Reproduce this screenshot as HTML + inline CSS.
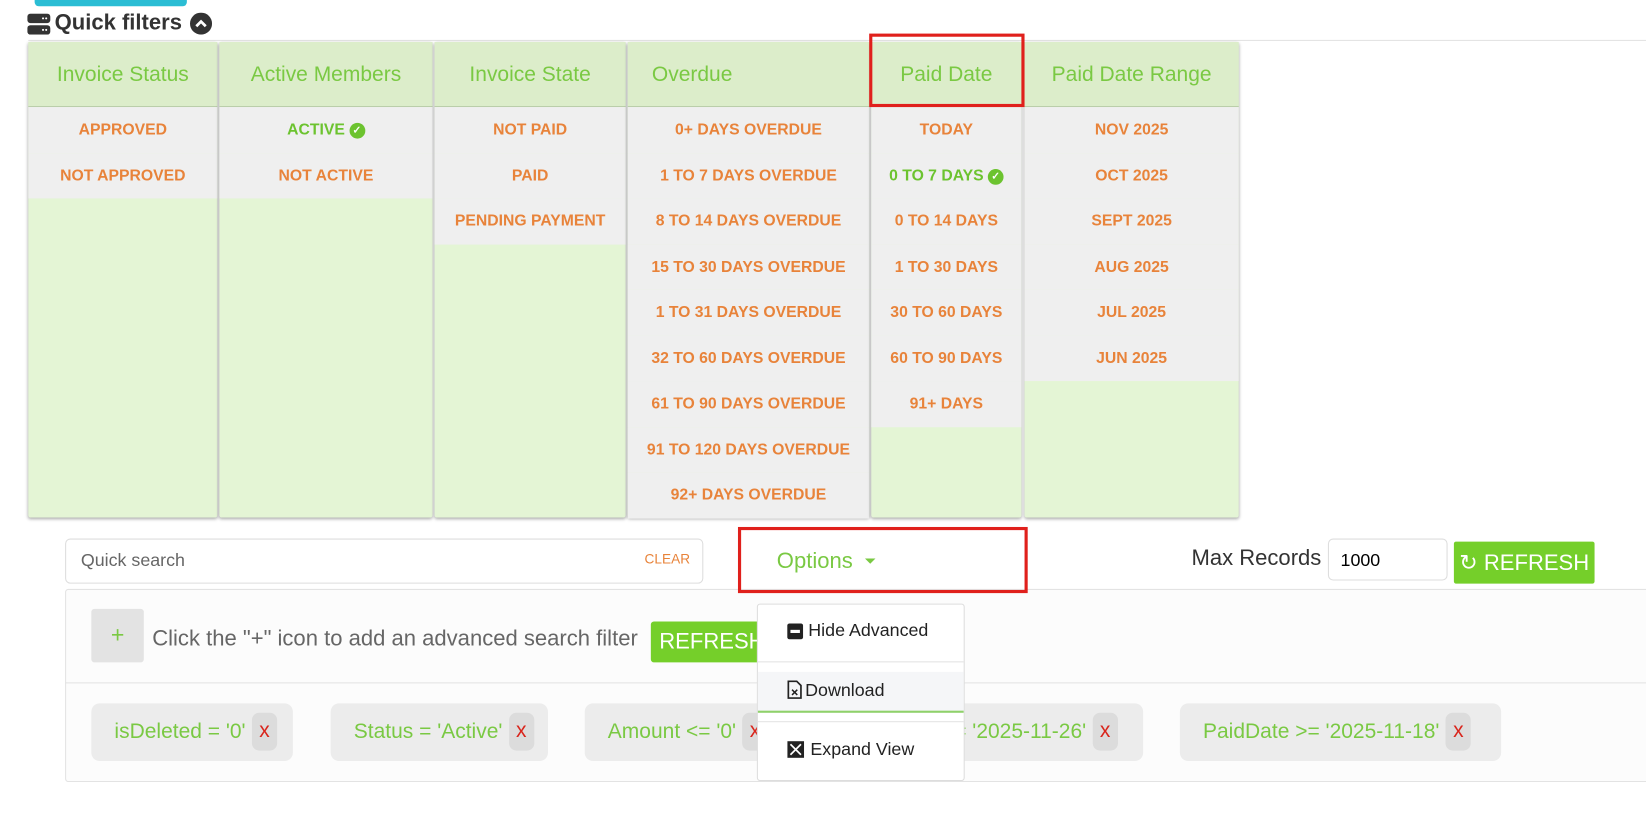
<!DOCTYPE html>
<html><head><style>
html,body{margin:0;width:1646px;height:836px;background:#fff;overflow:hidden}
#w{position:absolute;left:0;top:0;width:1568px;height:797px;transform:scale(1.04974);transform-origin:0 0;font-family:"Liberation Sans",sans-serif}
.a{position:absolute}
.col{position:absolute;top:40px;height:453px;background:#e4f5d5;box-shadow:0 1px 3px rgba(0,0,0,.35);border-radius:2px}
.col .h{height:61px;background:#dcedca;border-bottom:1px solid #b9cda9;color:#7ac943;font-size:20px;text-align:center;line-height:62px}
.col .r{height:43.5px;background:#efefef;color:#e8833a;font-weight:bold;font-size:15px;text-align:center;line-height:43px}
.col .r.g{color:#6cc32f}
.chk{display:inline-block;width:15px;height:15px;border-radius:50%;background:#6cc32f;color:#fff;font-size:10px;line-height:15px;vertical-align:1px;margin-left:4px}
.chip{position:absolute;top:670px;height:55px;background:#ececec;border-radius:8px;color:#7ac943;font-size:20px;line-height:55px;padding-left:22px}
.chip i{font-style:normal;display:inline-block;background:#dcdcdc;color:#d9251c;border-radius:7px;width:24px;height:36px;line-height:34px;text-align:center;margin-left:6px;vertical-align:1px}
</style></head><body><div id="w">
<div class="a" style="left:33px;top:0;width:145px;height:6px;background:#2bbdd4;border-radius:0 0 4px 4px"></div>
<div class="a" style="left:27px;top:38px;width:1541px;height:1px;background:#e3e3e3"></div>
<svg class="a" style="left:26px;top:13px" width="22" height="20"><rect x="0" y="0" width="22" height="9" rx="3" fill="#333"/><rect x="0" y="11" width="22" height="9" rx="3" fill="#333"/><circle cx="15" cy="4.5" r="1" fill="#fff"/><circle cx="18" cy="4.5" r="1" fill="#fff"/><circle cx="15" cy="15.5" r="1" fill="#fff"/><circle cx="18" cy="15.5" r="1" fill="#fff"/></svg>
<div class="a" style="left:52px;top:10px;font-size:21px;font-weight:bold;color:#333">Quick filters</div>
<svg class="a" style="left:181px;top:12px" width="21" height="21"><circle cx="10.5" cy="10.5" r="10.5" fill="#333"/><path d="M6 13l4.5-4.5L15 13" stroke="#fff" stroke-width="2.6" fill="none"/></svg>

<div class="col" style="left:27px;width:180px"><div class="h">Invoice Status</div><div class="r">APPROVED</div><div class="r">NOT APPROVED</div></div>
<div class="col" style="left:209px;width:203px"><div class="h">Active Members</div><div class="r g">ACTIVE<span class="chk">✓</span></div><div class="r">NOT ACTIVE</div></div>
<div class="col" style="left:414px;width:182px"><div class="h">Invoice State</div><div class="r">NOT PAID</div><div class="r">PAID</div><div class="r">PENDING PAYMENT</div></div>
<div class="col" style="left:598px;width:230px"><div class="h" style="text-align:left;padding-left:23px">Overdue</div><div class="r">0+ DAYS OVERDUE</div><div class="r">1 TO 7 DAYS OVERDUE</div><div class="r">8 TO 14 DAYS OVERDUE</div><div class="r">15 TO 30 DAYS OVERDUE</div><div class="r">1 TO 31 DAYS OVERDUE</div><div class="r">32 TO 60 DAYS OVERDUE</div><div class="r">61 TO 90 DAYS OVERDUE</div><div class="r">91 TO 120 DAYS OVERDUE</div><div class="r">92+ DAYS OVERDUE</div></div>
<div class="col" style="left:830px;width:143px"><div class="h">Paid Date</div><div class="r">TODAY</div><div class="r g">0 TO 7 DAYS<span class="chk">✓</span></div><div class="r">0 TO 14 DAYS</div><div class="r">1 TO 30 DAYS</div><div class="r">30 TO 60 DAYS</div><div class="r">60 TO 90 DAYS</div><div class="r">91+ DAYS</div></div>
<div class="col" style="left:976px;width:204px"><div class="h">Paid Date Range</div><div class="r">NOV 2025</div><div class="r">OCT 2025</div><div class="r">SEPT 2025</div><div class="r">AUG 2025</div><div class="r">JUL 2025</div><div class="r">JUN 2025</div></div>
<div class="a" style="left:828px;top:32px;width:142px;height:64px;border:3px solid #e0201c"></div>

<div class="a" style="left:62px;top:513px;width:606px;height:41px;border:1px solid #ddd;border-radius:5px"></div>
<div class="a" style="left:77px;top:524px;font-size:17px;color:#666">Quick search</div>
<div class="a" style="left:614px;top:525px;font-size:13px;color:#e8833a">CLEAR</div>
<div class="a" style="left:740px;top:523px;font-size:21px;color:#7ac943">Options</div>
<div class="a" style="left:824px;top:532px;border:5px solid transparent;border-top-color:#7ac943"></div>
<div class="a" style="left:1135px;top:520px;font-size:21px;color:#333">Max Records</div>
<div class="a" style="left:1265px;top:513px;height:40px;border:1px solid #ddd;border-radius:5px;font-size:17px;line-height:40px;padding-left:11px;box-sizing:border-box;width:114px">1000</div>
<div class="a" style="left:1385px;top:516px;width:134px;height:40px;background:#75cf2a;border-radius:2px;color:#fff;font-size:21px;line-height:41px;text-align:center">&#x21bb; REFRESH</div>

<div class="a" style="left:62px;top:561px;width:1600px;height:182px;border:1px solid #e3e3e3;background:#fcfcfc;border-radius:3px"></div>
<div class="a" style="left:703px;top:502px;width:270px;height:57px;border:3px solid #e0201c"></div>
<div class="a" style="left:62px;top:650px;width:1600px;height:1px;background:#e3e3e3"></div>
<div class="a" style="left:87px;top:580px;width:50px;height:51px;background:#e3e3e3;border-radius:3px;color:#7ac943;font-size:22px;text-align:center;line-height:50px">+</div>
<div class="a" style="left:145px;top:597px;font-size:21px;color:#666">Click the "+" icon to add an advanced search filter</div>
<div class="a" style="left:620px;top:592px;width:140px;height:39px;background:#75cf2a;border-radius:3px;color:#fff;font-size:21px;line-height:40px;padding-left:8px;box-sizing:border-box">REFRESH</div>
<div class="a" style="left:910px;top:592px;width:8px;height:39px;background:#e8833a;border-radius:0 3px 3px 0"></div>
<div class="chip" style="left:87px;width:170px">isDeleted = '0'<i>x</i></div>
<div class="chip" style="left:315px;width:185px">Status = 'Active'<i>x</i></div>
<div class="chip" style="left:557px;width:510px">Amount &lt;= '0'<i>x</i><span style="position:absolute;left:352px">= '2025-11-26'<i>x</i></span></div>
<div class="chip" style="left:1124px;width:284px">PaidDate &gt;= '2025-11-18'<i>x</i></div>

<div class="a" style="left:721px;top:575px;width:196px;height:167px;background:#fff;border:1px solid #ddd;border-radius:3px"></div>
<div class="a" style="left:750px;top:594px;width:15px;height:15px;background:#222;border-radius:2px"><div style="margin:6px 3px;height:3px;background:#fff"></div></div>
<div class="a" style="left:770px;top:591px;font-size:17px;color:#222">Hide Advanced</div>
<div class="a" style="left:722px;top:630px;width:196px;height:1px;background:#e3e3e3"></div>
<div class="a" style="left:722px;top:640px;width:196px;height:37px;background:#f5f6f8;border-bottom:2px solid #8fd16a"></div>
<svg class="a" style="left:750px;top:648px" width="14" height="18"><path d="M1 1h8l4 4v12H1z" fill="none" stroke="#222" stroke-width="1.6"/><path d="M4.5 9l5 5M9.5 9l-5 5" stroke="#222" stroke-width="1.4"/></svg>
<div class="a" style="left:767px;top:648px;font-size:17px;color:#222">Download</div>
<div class="a" style="left:722px;top:687px;width:196px;height:1px;background:#e3e3e3"></div>
<svg class="a" style="left:750px;top:706px" width="16" height="16"><rect width="16" height="16" fill="#222"/><path d="M3 3l10 10M13 3L3 13" stroke="#fff" stroke-width="1.6"/></svg>
<div class="a" style="left:772px;top:704px;font-size:17px;color:#222">Expand View</div>
</div></body></html>
